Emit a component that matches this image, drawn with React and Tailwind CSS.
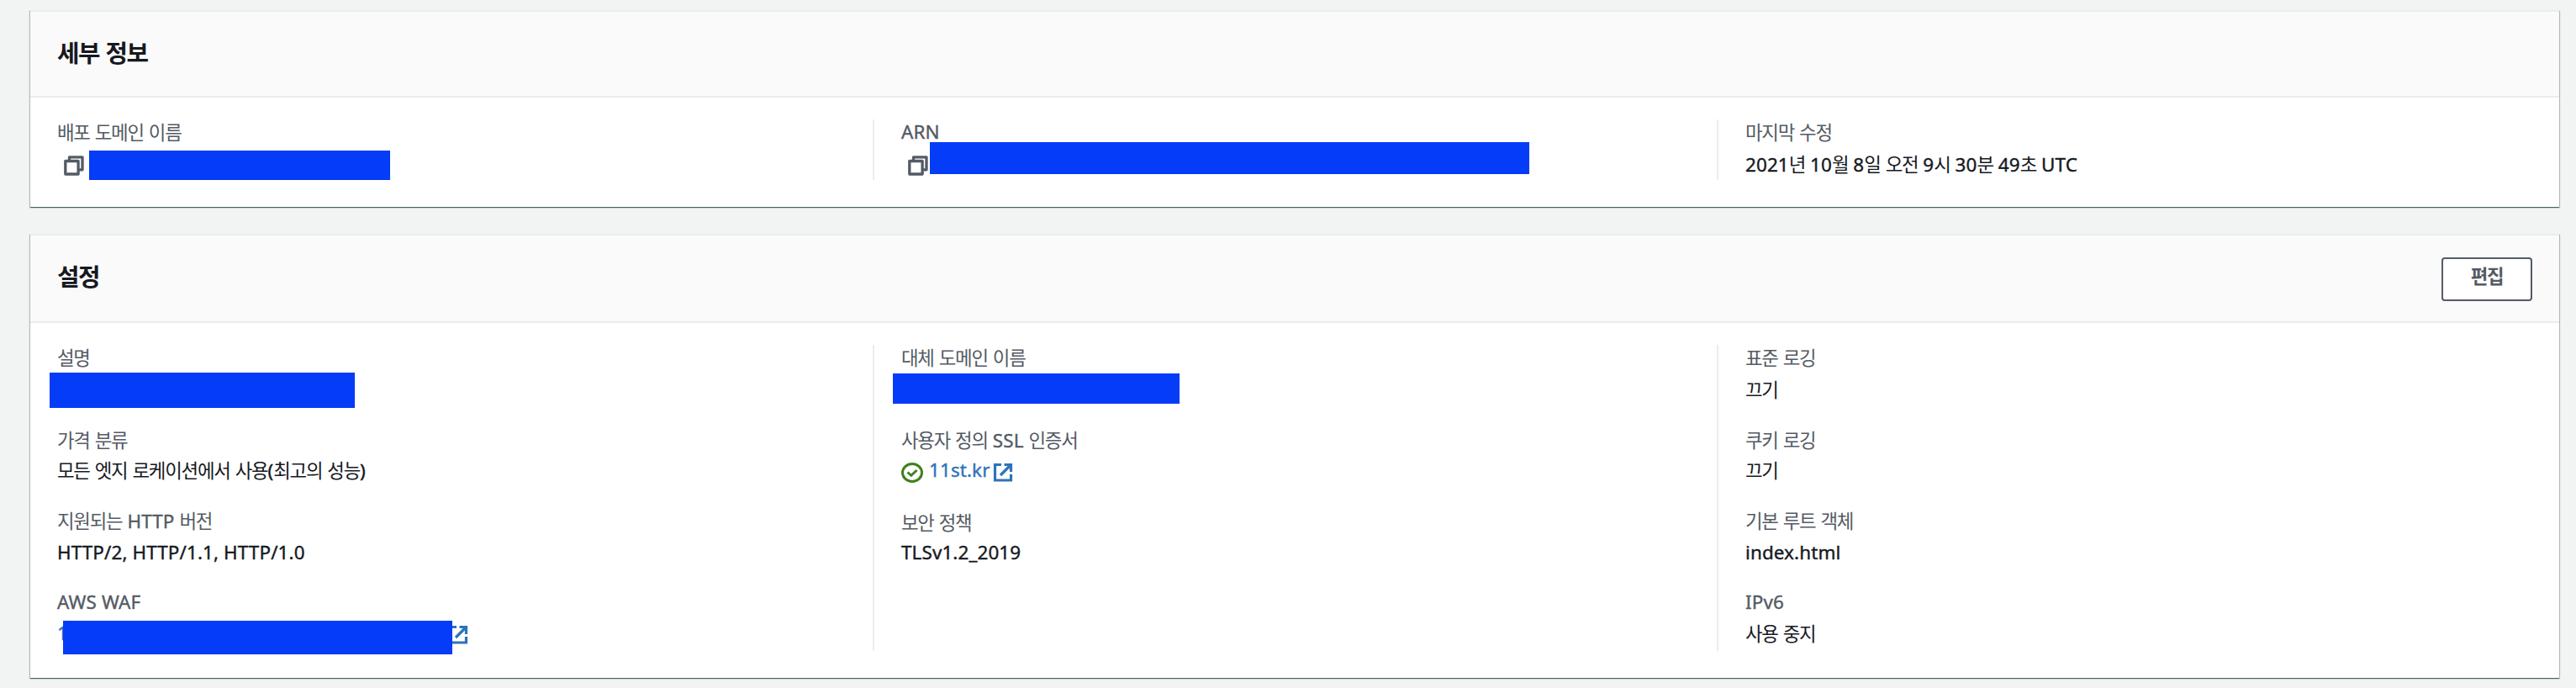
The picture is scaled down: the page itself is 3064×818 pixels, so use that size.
import React from "react";

const HANGUL = /([가-힣]+)/;

// Hangul runs are set slightly tighter and lighter than Latin ones.
function Text({ children, className }) {
  const leading = HANGUL.test(children) ? "leading-8" : "leading-[30px]";
  return (
    <span className={"block whitespace-pre " + (className || leading)}>
      {children.split(HANGUL).map((run, i) => (
        <span key={i} className={HANGUL.test(run) ? "tracking-[-0.055em]" : "tracking-[0.006em] [-webkit-text-stroke:0.4px]"}>{run}</span>
      ))}
    </span>
  );
}

function CopyIcon() {
  return (
    <svg width="24" height="24" viewBox="0 0 24 24" fill="none" stroke="#545b64" strokeWidth="3.3" strokeLinejoin="round" className="shrink-0">
      <path d="M1.800 6.500h15.300v15.500H1.800z" />
      <path d="M6.500 6V1.800h15.500v15h-4.500" />
    </svg>
  );
}

function ExternalIcon({ className }) {
  return (
    <svg width="24" height="24" viewBox="0 0 24 24" fill="none" stroke="#2e73b8" strokeWidth="3.2" className={"shrink-0 " + className}>
      <path d="M10 2.500H2.500v18.500h19V14" />
      <path d="M13.500 2.500h8V11M21.500 2.500L9 15" />
    </svg>
  );
}

function CheckIcon() {
  return (
    <svg width="26" height="24" viewBox="0 0 26 24" fill="none" stroke="#3f8020" strokeWidth="3" className="shrink-0">
      <ellipse cx="13" cy="12" rx="11.500" ry="10.500" />
      <path d="M7.500 11.500l4.300 3.800 6.700-6.300" />
    </svg>
  );
}

function Card({ title, action, headerClass, children }) {
  return (
    <section className="border-t-2 border-[#eaeded] bg-white shadow-[0_1px_1px_0_rgba(0,28,36,0.5),1px_1px_1px_0_rgba(0,28,36,0.2),-1px_1px_1px_0_rgba(0,28,36,0.2)]">
      <header className={"flex justify-between border-b-2 border-[#eaeded] bg-[#fafafa] px-8 " + headerClass}>
        <h2 className="text-[28.8px] font-bold">
          <Text className="leading-9">{title}</Text>
        </h2>
        {action}
      </header>
      <div className="flex px-8 pt-[26px] pb-8">{children}</div>
    </section>
  );
}

function Column({ first, className = "", children }) {
  return (
    <div className={(first ? "w-[970px] shrink-0 " : "w-[1004px] shrink-0 border-l-2 border-[#eaeded] pl-8 last:w-[900px] ") + className}>
      {children}
    </div>
  );
}

function Field({ label, gap = "mt-1.5", className = "", children }) {
  return (
    <div className={className}>
      <div className="h-8 text-[#545b64]">
        <Text>{label}</Text>
      </div>
      <div className={"flex h-8 " + gap}>{children}</div>
    </div>
  );
}

function Mask({ className }) {
  return <div className={"shrink-0 bg-[#053cf7] " + className} />;
}

export default function App() {
  return (
    <main className="h-[818px] overflow-hidden bg-[#f2f3f3] pt-3 pr-5 pl-9 font-['Noto_Sans','Noto_Sans_CJK_KR',sans-serif] text-[22.4px] text-[#16191f]">
      <Card title="세부 정보" headerClass="h-[102px] pt-[31px]">
        <Column first className="h-[72px]">
          <Field label="배포 도메인 이름">
            <div className="mt-[5px] ml-2"><CopyIcon /></div>
            <Mask className="-mt-px ml-1.5 h-[35px] w-[358px]" />
          </Field>
        </Column>
        <Column>
          <Field label="ARN">
            <div className="mt-[5px] ml-2"><CopyIcon /></div>
            <Mask className="-mt-[11px] ml-0.5 h-[38px] w-[713px]" />
          </Field>
        </Column>
        <Column>
          <Field label="마지막 수정"><Text>2021년 10월 8일 오전 9시 30분 49초 UTC</Text></Field>
        </Column>
      </Card>

      <div className="h-8" />

      <Card
        title="설정"
        headerClass="h-[104px] pt-[31px]"
        action={
          <button className="-mt-[5px] flex h-[52px] w-[108px] justify-center rounded-[4px] border-2 border-[#545b64] bg-white font-bold text-[#545b64]">
            <Text className="leading-[42px]">편집</Text>
          </button>
        }
      >
        <Column first className="h-[364px]">
          <Field label="설명"><Mask className="-mt-[5px] -ml-[9px] h-[42px] w-[363px]" /></Field>
          <Field label="가격 분류" gap="mt-1" className="mt-7"><Text>모든 엣지 로케이션에서 사용(최고의 성능)</Text></Field>
          <Field label="지원되는 HTTP 버전" className="mt-7"><Text>HTTP/2, HTTP/1.1, HTTP/1.0</Text></Field>
          <Field label="AWS WAF" gap="mt-[5px]" className="mt-[27px]">
            <div className="w-[7px] text-[#2e73b8]"><Text>1</Text></div>
            <Mask className="z-10 h-10 w-[463px]" />
            <ExternalIcon className="mt-[5px] -ml-[5px]" />
          </Field>
        </Column>
        <Column>
          <Field label="대체 도메인 이름"><Mask className="-mt-1 -ml-2.5 h-9 w-[341px]" /></Field>
          <Field label="사용자 정의 SSL 인증서" gap="mt-1" className="mt-7">
            <div className="mt-1.5"><CheckIcon /></div>
            <div className="ml-[7px] text-[#2e73b8]"><Text>11st.kr</Text></div>
            <ExternalIcon className="mt-1.5 ml-[3px]" />
          </Field>
          <Field label="보안 정책" gap="mt-1" className="mt-[30px]"><Text>TLSv1.2_2019</Text></Field>
        </Column>
        <Column>
          <Field label="표준 로깅"><Text>끄기</Text></Field>
          <Field label="쿠키 로깅" gap="mt-1" className="mt-7"><Text>끄기</Text></Field>
          <Field label="기본 루트 객체" className="mt-7"><Text>index.html</Text></Field>
          <Field label="IPv6" gap="mt-[5px]" className="mt-[27px]"><Text>사용 중지</Text></Field>
        </Column>
      </Card>
    </main>
  );
}
